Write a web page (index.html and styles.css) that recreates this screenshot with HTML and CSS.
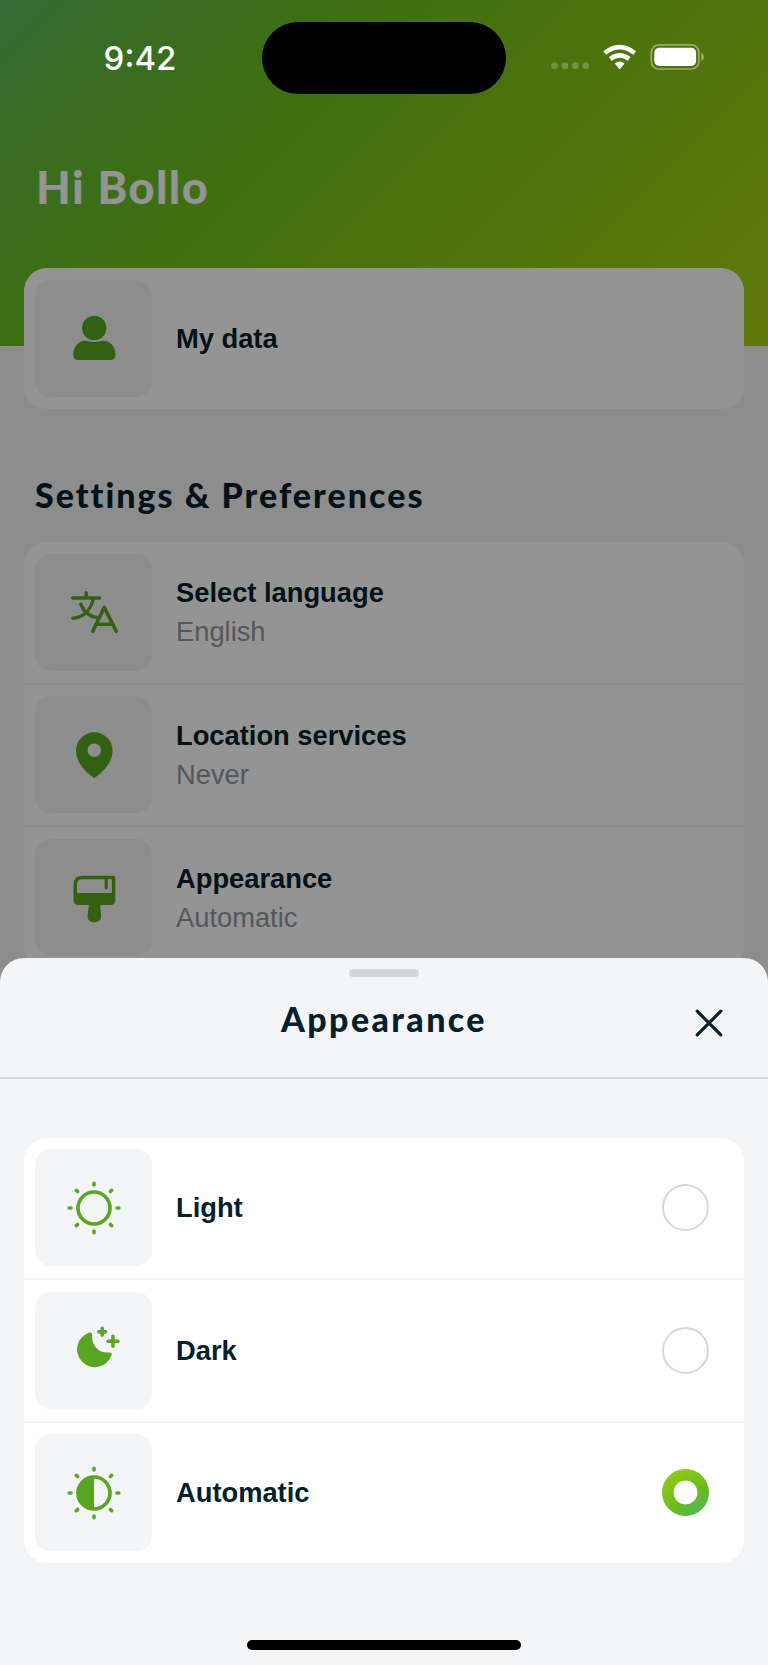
FILE: index.html
```html
<!DOCTYPE html>
<html lang="en">
<head>
<meta charset="utf-8">
<title>Settings</title>
<link rel="stylesheet" href="styles.css">
</head>
<body>
<div class="phone">
  <main class="screen">
    <header class="hero"><h1 class="greeting">Hi Bollo</h1></header>
    <section class="card profile">
      <div class="row">
        <div class="tile"><svg class="icon" viewBox="0 0 60 60"><circle cx="30.2" cy="20" r="12.2"/><path d="M21.500 32.700C24.500 32.700 26.500 34 30.300 34S36 32.700 39.200 32.700C46.500 32.700 51.600 39 51.600 46.500C51.600 50 50 52 46.800 52H14C10.800 52 9.200 50 9.200 46.500C9.200 39 14.200 32.700 21.500 32.700Z"/></svg></div>
        <div class="label"><span class="name">My data</span></div>
      </div>
    </section>
    <h2 class="section-title">Settings &amp; Preferences</h2>
    <section class="card">
      <div class="row">
        <div class="tile"><svg class="icon line" viewBox="0 0 60 60"><path d="M8.700 16H35.500M22.200 10.900V16M29.500 16C27 28 19.500 35.500 8.900 36.200M16.900 22.300C19.500 29 25 34.500 34 35.800M28.800 49.300L40.200 25.400L52.200 49.300M32.600 42.300H48.300"/></svg></div>
        <div class="label"><span class="name">Select language</span><span class="value">English</span></div>
      </div>
      <div class="row">
        <div class="tile"><svg class="icon" viewBox="0 0 60 60"><path fill-rule="evenodd" d="M30.300 53C25 49.500 12 39.500 12 25.600A18.300 18.300 0 0 1 48.600 25.600C48.600 39.500 35.600 49.500 30.300 53ZM30.300 18.600A6.700 6.700 0 1 0 30.300 32A6.700 6.700 0 1 0 30.300 18.600Z"/></svg></div>
        <div class="label"><span class="name">Location services</span><span class="value">Never</span></div>
      </div>
      <div class="row">
        <div class="tile"><svg class="icon" viewBox="0 0 60 60"><path fill-rule="evenodd" d="M18 7.700H49.500Q51.300 7.700 51.300 9.500V32Q51.300 37 46.300 37H36.200L37 47.500C37.400 52 34.300 54.300 30.300 54.300S23.200 52 23.600 47.500L24.800 37H14.500Q9.500 37 9.500 32V17Q9.500 7.700 18 7.700ZM18 11.200Q13 11.200 13 17V25H47.900V11.200H43.800V20Q43.800 21.400 42.200 21.400T40.600 20V11.200Z"/></svg></div>
        <div class="label"><span class="name">Appearance</span><span class="value">Automatic</span></div>
      </div>
    </section>
  </main>
  <div class="scrim"></div>

  <div class="status">
    <span class="time">9:42</span>
    <span class="island"></span>
    <svg class="signals" width="156" height="30" viewBox="549 42 156 30">
      <g fill="#fff" fill-opacity=".23"><circle cx="554.4" cy="65.7" r="3.4"/><circle cx="564.900" cy="65.7" r="3.4"/><circle cx="575.3" cy="65.7" r="3.4"/><circle cx="585.8" cy="65.7" r="3.4"/></g>
      <g fill="none" stroke="#fff" stroke-width="4.700"><path d="M604.700 53Q619.700 41.200 634.700 53"/><path d="M610.300 58.800Q619.700 51.800 629.100 58.800"/></g>
      <path fill="#fff" d="M614.800 63.400Q619.700 59.700 624.600 63.400L620.500 68.500Q619.700 69.500 618.900 68.500Z"/>
      <rect x="651.300" y="44.800" width="47.600" height="24.200" rx="7.600" fill="none" stroke="#fff" stroke-opacity=".4" stroke-width="1.700"/>
      <rect x="654.300" y="47.800" width="41.800" height="18.200" rx="5" fill="#fff"/>
      <path fill="#fff" fill-opacity=".45" d="M701.300 53C704.700 54.500 704.700 59.500 701.300 61Z"/>
    </svg>
  </div>

  <section class="sheet">
    <header class="sheet-head">
      <span class="grabber"></span>
      <h2 class="sheet-title">Appearance</h2>
      <svg class="close" viewBox="0 0 30 30"><path d="M3.200 3.200L26.800 26.800M26.800 3.200L3.200 26.800"/></svg>
    </header>
    <div class="card options">
      <div class="row">
        <div class="tile"><svg class="icon line" viewBox="0 0 60 60"><circle cx="30" cy="30" r="16"/><path d="M30 5.200V7M30 53V54.800M5.200 30H7M53 30H54.800M12.300 12.300L13.600 13.600M47.700 12.300L46.400 13.600M12.300 47.700L13.600 46.400M47.700 47.700L46.400 46.400"/></svg></div>
        <div class="label"><span class="name">Light</span></div>
        <span class="radio"></span>
      </div>
      <div class="row">
        <div class="tile"><svg class="icon" viewBox="0 0 60 60"><path d="M25.400 12.600Q28.400 12.200 28.200 15.300C27.300 25.500 35 33.500 45.300 32.400Q48.400 32.200 47.500 35.200A17.700 17.700 0 1 1 25.400 12.600Z"/><path class="stroke" d="M38.200 8.300V15.100M34.800 11.700H41.600M49 16.400V26.200M44.100 21.300H53.900"/></svg></div>
        <div class="label"><span class="name">Dark</span></div>
        <span class="radio"></span>
      </div>
      <div class="row">
        <div class="tile"><svg class="icon line" viewBox="0 0 60 60"><circle cx="30" cy="30" r="16"/><path class="solid" d="M30 13.800V46.200A16.200 16.200 0 0 1 30 13.800Z"/><path d="M30 5.200V7M30 53V54.800M5.200 30H7M53 30H54.800M12.300 12.300L13.600 13.600M47.700 12.300L46.400 13.600M12.300 47.700L13.600 46.400M47.700 47.700L46.400 46.400"/></svg></div>
        <div class="label"><span class="name">Automatic</span></div>
        <span class="radio checked"></span>
      </div>
    </div>
    <span class="home"></span>
  </section>
</div>
</body>
</html>
```
FILE: styles.css
```css
* { box-sizing: border-box; }
body { margin: 0; font-family: "Liberation Sans", Arial, sans-serif; color: #04202a; }
.phone { position: relative; width: 768px; height: 1665px; overflow: hidden; background: #f3f3f3; }
.screen { height: 1665px; }
.hero { height: 346px; padding: 158.500px 36px 0; background: linear-gradient(135deg, #58b858 0%, #6cbf1e 33%, #8ec815 68%, #a9d212 100%); }
.greeting { margin: 0; font: 900 45px/56px Lato, sans-serif; color: #fff; letter-spacing: 1.500px; }
.card { margin: 0 24px; background: #fff; border-radius: 23px; }
.profile { position: relative; margin-top: -78px; }
.row { display: flex; align-items: center; gap: 24px; height: 140.600px; padding: 0 35px 0 11px; }
.row + .row { height: 142.600px; border-top: 2px solid #f3f5f6; }
.tile { display: flex; align-items: center; justify-content: center; width: 117px; height: 117px; border-radius: 16px; background: #f3f5f6; }
.screen .tile { background: #f3f3f3; }
.icon { width: 60px; height: 60px; fill: #5ba524; }
.line, .stroke { fill: none; stroke: #5ba524; stroke-width: 3.600px; stroke-linecap: round; stroke-linejoin: round; }
.solid { fill: #5ba524; stroke: none; }
.label { display: flex; flex: 1; flex-direction: column; font-size: 27.300px; line-height: 39px; }
.name { font-weight: 700; }
.value { color: #92989c; }
.section-title { margin: 65.500px 35px 25.500px; font: 900 34px/42.500px Lato, sans-serif; letter-spacing: 2px; white-space: nowrap; }
.scrim { position: absolute; inset: 0; background: rgba(0, 0, 0, .42); }
.status { position: absolute; inset: 0 0 auto; display: grid; grid-template-columns: 262px 244px 262px; height: 94px; padding-top: 22px; }
.time { padding-left: 18px; text-align: center; font: 500 33px/72px Inter, sans-serif; color: #fff; }
.island { height: 71.500px; border-radius: 36px; background: #000; }
.signals { margin: 20px 0 0 43px; }
.sheet { position: absolute; inset: 957.500px 0 0; display: flex; flex-direction: column; border-radius: 24px 24px 0 0; background: #f3f5f6; }
.sheet-head { display: grid; grid-template: 20px 1fr / 1fr 206px 1fr; flex: none; height: 121px; border-bottom: 2px solid #d5d9db; }
.grabber { grid-column: 1 / -1; justify-self: center; width: 70px; height: 8px; margin-top: 11.500px; border-radius: 4px; background: #d3d8d9; }
.sheet-title { grid-column: 2; margin: 18.500px 0 0; font: 900 34px/46px Lato, sans-serif; white-space: nowrap; letter-spacing: 2.400px; }
.close { justify-self: end; width: 30px; height: 30px; margin: 30.500px 44px 0 0; fill: none; stroke: #04202a; stroke-width: 3.200px; stroke-linecap: round; }
.options { margin-top: 59px; }
.radio { width: 47px; height: 47px; border: 2px solid #d3d8d9; border-radius: 50%; }
.checked { border: 0; background: radial-gradient(circle, #fff 11.500px, transparent 12.300px), linear-gradient(145deg, #92cb15 10%, #6abb1c 60%, #4bb861 90%); }
.home { align-self: center; width: 274px; height: 10px; margin: auto 0 15.500px; border-radius: 5px; background: #000; }
```
